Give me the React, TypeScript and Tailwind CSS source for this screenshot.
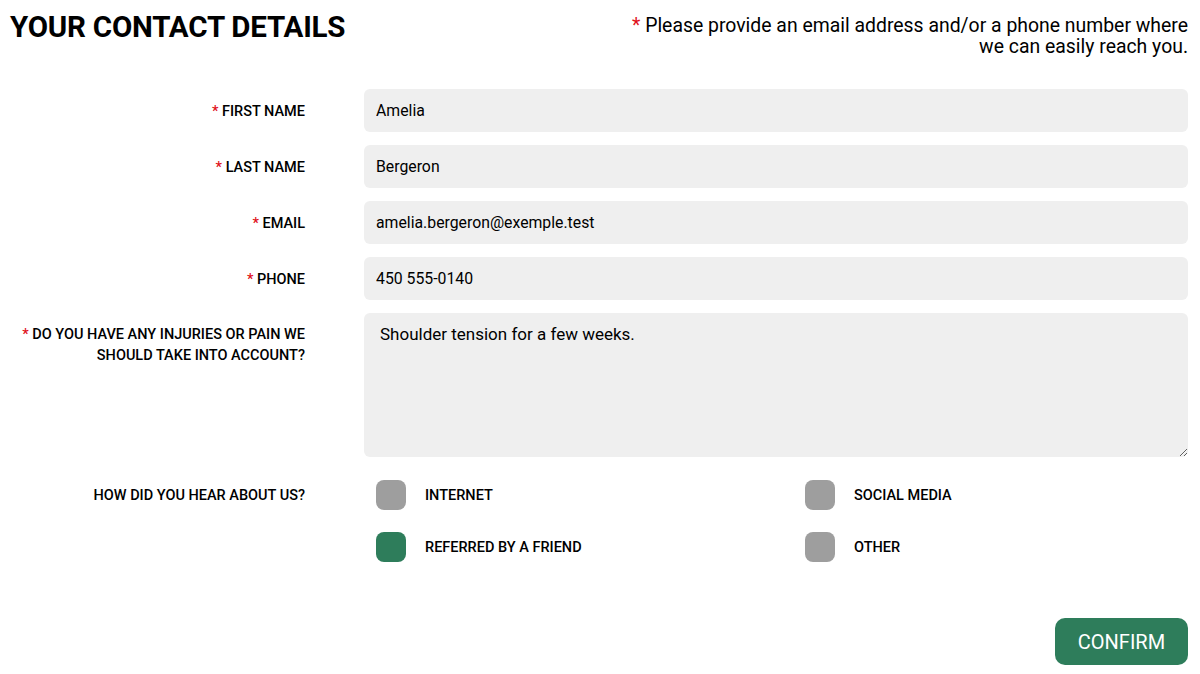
import { useState } from 'react';

const fields = [
  { label: 'FIRST NAME', value: 'Amelia' },
  { label: 'LAST NAME', value: 'Bergeron' },
  { label: 'EMAIL', value: 'amelia.bergeron@exemple.test' },
  { label: 'PHONE', value: '450 555-0140' },
];

const sources = ['INTERNET', 'SOCIAL MEDIA', 'REFERRED BY A FRIEND', 'OTHER'];

export default function App() {
  const [source, setSource] = useState('REFERRED BY A FRIEND');

  return (
    <div className="min-h-[674px] bg-white pl-[10px] pr-[12px] text-black font-['Roboto',sans-serif]">
      <div className="flex items-start justify-between pt-[10px]">
        <h1 className="text-[29.5px] font-bold leading-[34px] tracking-[-0.2px]">YOUR CONTACT DETAILS</h1>
        <p className="mt-[5px] text-right text-[19.4px] leading-[21px]">
          <span className="text-[#e0101a]">*</span> Please provide an email address and/or a phone number where
          <br />
          we can easily reach you.
        </p>
      </div>

      <form className="mt-[32px] grid grid-cols-[295px_1fr] gap-x-[59px] gap-y-[13px]">
        {fields.map((f) => (
          <div key={f.label} className="contents">
            <label className="pt-[12px] text-right text-[14.5px] font-medium leading-[21px]">
              <span className="text-[#e0101a]">*</span> {f.label}
            </label>
            <input
              defaultValue={f.value}
              className="h-[43px] rounded-[6px] bg-[#efefef] px-[12px] text-[15.8px] outline-none"
            />
          </div>
        ))}

        <label className="pt-[11px] text-right text-[14.5px] font-medium leading-[21px]">
          <span className="text-[#e0101a]">*</span> DO YOU HAVE ANY INJURIES OR PAIN WE
          <br />
          SHOULD TAKE INTO ACCOUNT?
        </label>
        <textarea
          defaultValue="Shoulder tension for a few weeks."
          className="h-[144px] resize-y rounded-[6px] bg-[#efefef] px-[16px] py-[11px] text-[17px] leading-[20px] outline-none"
        />

        <div className="mt-[10px] pt-[5px] text-right text-[14.5px] font-medium leading-[21px]">
          HOW DID YOU HEAR ABOUT US?
        </div>
        <div className="mt-[10px] grid grid-cols-[429px_1fr] gap-y-[22px] pl-[12px]">
          {sources.map((s) => (
            <button
              type="button"
              key={s}
              onClick={() => setSource(s)}
              className="flex items-center gap-[19px] text-left"
            >
              <span
                className={
                  s === source
                    ? 'h-[30px] w-[30px] rounded-[8px] bg-[#2e7d5b]'
                    : 'h-[30px] w-[30px] rounded-[8px] bg-[#9e9e9e]'
                }
              />
              <span className="pt-[1px] text-[14.5px] font-medium">{s}</span>
            </button>
          ))}
        </div>
      </form>

      <div className="mt-[56px] flex justify-end">
        <button
          type="button"
          className="h-[47px] w-[133px] rounded-[10px] bg-[#2e7d5b] text-[20px] text-white"
        >
          CONFIRM
        </button>
      </div>
    </div>
  );
}
